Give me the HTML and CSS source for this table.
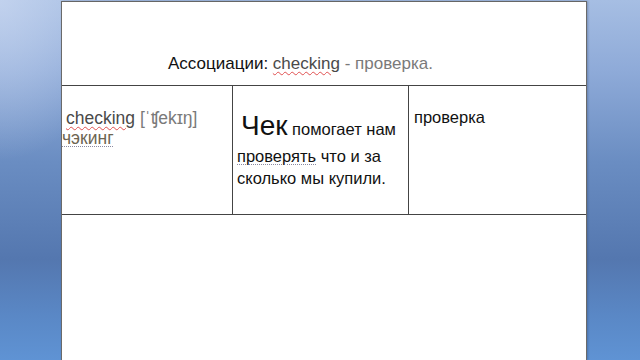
FILE: index.html
```html
<!DOCTYPE html>
<html lang="ru">
<head>
<meta charset="utf-8">
<link rel="stylesheet" href="styles.css">
</head>
<body>
<div class="page">
  <div class="table">
    <div class="head"><span class="title"><span class="black">Ассоциации:</span> <span class="spell dark">checking</span><span class="light"> - проверка.</span></span></div>
    <div class="cell c1">
      <p class="word"><span class="spell dark lead">checking</span> <span class="light">[ˈʧekɪŋ]</span><br><span class="grammar brown">чэкинг</span></p>
    </div>
    <div class="cell c2">
      <p class="assoc"><span class="big">Чек</span> помогает нам<br><span class="grammar">проверять</span> что и за<br>сколько мы купили.</p>
    </div>
    <div class="cell c3">
      <p class="trans">проверка</p>
    </div>
  </div>
</div>
</body>
</html>
```
FILE: styles.css
```css
html, body {
  margin: 0;
  height: 360px;
  overflow: hidden;
}
body {
  font-family: "Liberation Sans", Arial, sans-serif;
  background:
    radial-gradient(ellipse 120px 160px at 0 0, rgba(205,218,242,0.7), rgba(205,218,242,0) 100%),
    linear-gradient(180deg, #a6bee3 0%, #8eaad8 20%, #6a8dc2 45%, #5477af 72%, #5a88c6 88%, #5f93d4 100%);
}
.page {
  box-sizing: border-box;
  margin: 1px 0 0 61px;
  width: 526px;
  height: 359px;
  background: #fff;
  border-left: 1px solid #6a6a6a;
  border-right: 1px solid #6a6a6a;
  border-top: 1px solid #666;
  box-shadow: 1px 0 2px rgba(40,60,100,0.35);
}
.table {
  display: grid;
  grid-template-columns: 171px 176px 1fr;
  grid-template-rows: 84px 129px;
}
.head {
  grid-column: 1 / 4;
  border-bottom: 1px solid #444;
  display: flex;
  align-items: flex-end;
  padding: 0 0 11px 106px;
}
.title {
  font-size: 17px;
  line-height: 20px;
}
.black { color: #111; }
.dark { color: #4a4a4a; }
.light { color: #7a7a7a; }
.brown { color: #6d6552; }
.spell {
  text-decoration: underline wavy #e05050;
  text-decoration-thickness: 1px;
  text-underline-offset: 2px;
}
.grammar {
  text-decoration: underline dotted #8a8aa0;
  text-decoration-thickness: 1px;
  text-underline-offset: 2px;
}
.cell {
  border-bottom: 1px solid #444;
  border-right: 1px solid #444;
}
.c3 { border-right: none; }
.c1 { padding: 22px 0 0 0; }
.word {
  margin: 0;
  font-size: 17.5px;
  line-height: 20px;
}
.lead { margin-left: 4px; }
.c2 { padding: 26px 6px 0 4px; }
.assoc {
  margin: 0;
  font-size: 16.5px;
  line-height: 22px;
  color: #111;
}
.big {
  display: inline-block;
  font-size: 28px;
  line-height: 28px;
  margin: 0 0 5px 4px;
}
.c3 { padding: 20px 0 0 5px; }
.trans {
  margin: 0;
  font-size: 16.5px;
  line-height: 22px;
  color: #111;
}
```
